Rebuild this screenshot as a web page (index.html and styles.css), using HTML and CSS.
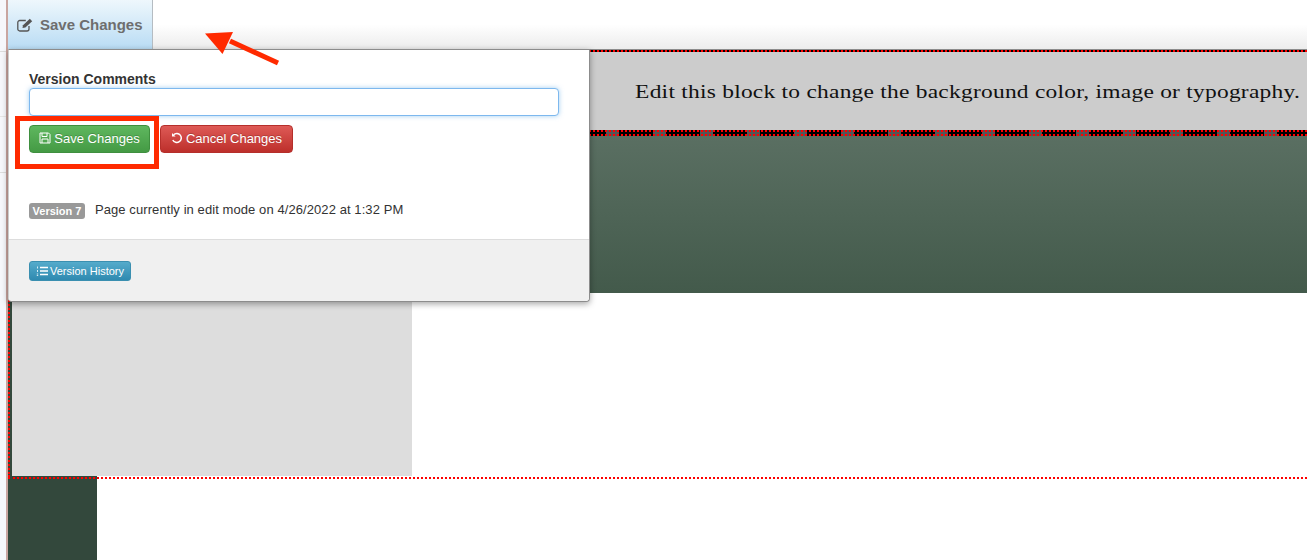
FILE: index.html
```html
<!DOCTYPE html>
<html lang="en">
<head>
    <meta charset="UTF-8">
    <meta name="viewport" content="width=device-width, initial-scale=1.0">
    <title>Save Changes</title>
    <link rel="stylesheet" href="styles.css">
</head>
<body>
    <div class="page">
        <div class="toolbar">
            <button class="toolbar-btn" type="button">
                <svg class="icon-edit" width="16" height="14" viewBox="0 0 16 14" fill="none">
                    <path d="M12 8v3a2 2 0 0 1-2 2H2.800a2 2 0 0 1-2-2V4.500a2 2 0 0 1 2-2h6" stroke="#555" stroke-width="1.300"/>
                    <path d="M5.500 10l.5-2.800L12.800.8l2.400 2.400-6.800 6.300z" fill="#555"/>
                </svg>
                Save Changes
            </button>
        </div>

        <div class="banner">
            <p>Edit this block to change the background color, image or typography.</p>
        </div>
        <div class="seam"></div>
        <div class="hero"></div>
        <div class="content-row">
            <div class="sidebar"></div>
        </div>
        <div class="footer-row"></div>

        <div class="popover">
            <div class="popover-body">
                <label class="field-label" for="comments">Version Comments</label>
                <input class="field-input" type="text" id="comments">
                <div class="actions">
                    <button class="btn btn-save" type="button">
                        <svg width="12" height="12" viewBox="0 0 12 12" fill="none" stroke="#fff" stroke-width="1">
                            <path d="M1 1h8.500L11 2.500V11H1z"/>
                            <path d="M3 1v3.500h5V1M3 11V7h6v4"/>
                        </svg>
                        Save Changes
                    </button>
                    <button class="btn btn-cancel" type="button">
                        <svg width="12" height="12" viewBox="0 0 12 12" fill="none" stroke="#fff" stroke-width="1.500">
                            <path d="M2.600 2.800A4.500 4.500 0 1 1 1.800 8"/>
                            <path d="M1 1v3.600h3.600z" fill="#fff" stroke="none"/>
                        </svg>
                        Cancel Changes
                    </button>
                </div>
                <div class="status">
                    <span class="badge">Version 7</span>
                    <span class="status-text">Page currently in edit mode on 4/26/2022 at 1:32 PM</span>
                </div>
            </div>
            <div class="popover-footer">
                <button class="btn-history" type="button">
                    <svg width="12" height="10" viewBox="0 0 12 10" fill="none" stroke="#fff">
                        <path d="M4 1.500h8M4 5h8M4 8.500h8" stroke-width="1.400"/>
                        <path d="M1.500 0.500v2M1.500 4v2M0.800 8h1.400M0.800 9.500h1.400" stroke-width="0.800"/>
                    </svg>
                    Version History
                </button>
            </div>
        </div>

        <div class="highlight-box"></div>
        <svg class="arrow" width="90" height="45" viewBox="0 0 90 45">
            <path d="M73 33L25 11" stroke="#ff2a00" stroke-width="5"/>
            <path d="M0 3.500L28 2L17.500 24z" fill="#ff2a00"/>
        </svg>
    </div>
</body>
</html>
```

FILE: styles.css
```css
* {
    margin: 0;
    padding: 0;
    box-sizing: border-box;
}

html, body {
    height: 100%;
    overflow: hidden;
}

body {
    background-color: #f6f7fb;
    background-image:
        linear-gradient(#ddd, #ddd),
        linear-gradient(#e6e6e6, #e6e6e6),
        linear-gradient(#ddd, #ddd);
    background-position: 0 51px, 0 116px, 0 172px;
    background-size: 6px 1px;
    background-repeat: no-repeat;
    font-family: "Liberation Sans", Arial, sans-serif;
}

.page {
    position: relative;
    height: 560px;
    margin-left: 6px;
    background-color: #fff;
    border-left: 2px solid #c9a5a0;
}

.toolbar {
    display: flex;
    height: 50px;
    background: linear-gradient(to bottom, #fff 50%, #ececec);
    border-bottom: 1px solid #8c8c8c;
}

.toolbar-btn {
    display: flex;
    align-items: center;
    gap: 7px;
    width: 145px;
    padding: 0 0 0 9px;
    border: none;
    border-right: 1px solid #b5bcc2;
    background: linear-gradient(to bottom, #eef7fc, #b9dcf4);
    color: #6e6e6e;
    font-family: inherit;
    font-size: 15px;
    font-weight: bold;
}

.banner {
    height: 80px;
    padding: 29px 7px 0 0;
    background: linear-gradient(#000 2px, #ccc 2px) border-box;
    border-top: 2px dotted #f00;
}

.banner p {
    font-family: "Liberation Serif", "Times New Roman", serif;
    font-size: 19px;
    letter-spacing: 0.2px;
    color: #111;
    text-align: right;
    transform: scaleX(1.233);
    transform-origin: right center;
}

.seam {
    height: 6px;
    border-top: 2px dotted #f00;
    border-bottom: 2px dotted #f00;
    background: repeating-linear-gradient(to right, #000 0, #000 34px, #555 34px, #555 47px) border-box;
}

.hero {
    height: 157px;
    background: linear-gradient(to bottom, #5a6f62, #435a4b);
}

.content-row {
    height: 184px;
    padding-left: 2px;
    border-left: 2px dotted #f00;
    background: linear-gradient(to right, #33483c 89px, #fff 89px) border-box;
}

.sidebar {
    width: 400px;
    height: 183px;
    background-color: #ddd;
}

.footer-row {
    height: 83px;
    border-top: 2px dotted #f00;
    background: linear-gradient(to right, #33483c 89px, #fff 89px) border-box;
}

.popover {
    position: absolute;
    top: 49px;
    left: 0;
    width: 582px;
    height: 253px;
    background-color: #fff;
    border: 1px solid #8c8c8c;
    border-left: 1px solid #ccc;
    border-radius: 0 0 4px 4px;
    box-shadow: 0 2px 6px rgba(0, 0, 0, 0.35);
    display: flex;
    flex-direction: column;
}

.popover-body {
    flex: 1;
    padding: 21px 30px 0 20px;
}

.field-label {
    display: block;
    font-size: 14px;
    font-weight: bold;
    line-height: 17px;
    color: #333;
}

.field-input {
    display: block;
    width: 530px;
    height: 28px;
    border: 1px solid #7db8ee;
    border-radius: 4px;
    box-shadow: 0 0 5px rgba(102, 175, 233, 0.6);
    outline: none;
}

.actions {
    display: flex;
    gap: 10px;
    margin-top: 9px;
}

.btn {
    display: flex;
    align-items: center;
    justify-content: center;
    gap: 3px;
    height: 28px;
    padding-bottom: 2px;
    border-radius: 4px;
    color: #fff;
    font-family: inherit;
    font-size: 13px;
    text-shadow: 0 -1px 0 rgba(0, 0, 0, 0.2);
}

.btn-save {
    width: 121px;
    background: linear-gradient(to bottom, #5fb75f, #449a44);
    border: 1px solid #3f8f3f;
}

.btn-cancel {
    width: 133px;
    background: linear-gradient(to bottom, #de5a56, #bd2f2b);
    border: 1px solid #b52f2b;
}

.status {
    display: flex;
    align-items: center;
    gap: 10px;
    margin-top: 49px;
}

.badge {
    width: 56px;
    height: 16px;
    border-radius: 3px;
    background-color: #999;
    color: #fff;
    font-size: 11px;
    font-weight: bold;
    line-height: 16px;
    text-align: center;
}

.status-text {
    padding-bottom: 2px;
    font-size: 13px;
    letter-spacing: 0.08px;
    color: #333;
}

.popover-footer {
    height: 62px;
    padding: 21px 20px 0;
    background-color: #f0f0f0;
    border-top: 1px solid #ddd;
    border-radius: 0 0 4px 4px;
}

.btn-history {
    display: flex;
    align-items: center;
    justify-content: center;
    gap: 2px;
    width: 102px;
    height: 20px;
    border: 1px solid #3a8fb0;
    border-radius: 3px;
    background: linear-gradient(to bottom, #55abcb, #2f8ab0);
    color: #fff;
    font-family: inherit;
    font-size: 11px;
}

/* annotations on top of the screenshot */
.highlight-box {
    position: absolute;
    top: 116px;
    left: 7px;
    width: 144px;
    height: 53px;
    border: 5px solid #ff2a00;
}

.arrow {
    position: absolute;
    top: 30px;
    left: 197px;
}
```
